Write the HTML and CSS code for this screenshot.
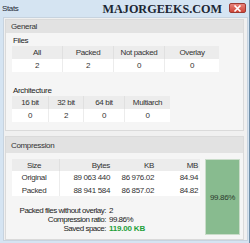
FILE: index.html
```html
<!DOCTYPE html>
<html lang="en">
<head>
    <meta charset="UTF-8">
    <title>Stats</title>
    <link rel="stylesheet" href="styles.css">
</head>
<body>
    <div class="window">
        <div class="titlebar">
            <span class="title">Stats</span>
            <span class="watermark">MAJORGEEKS.COM</span>
            <span class="close">
                <svg width="9" height="7" viewBox="0 0 9 7"><path d="M1.5 0.5 L7.5 6.5 M7.5 0.5 L1.5 6.5" stroke="#fff" stroke-width="1.6"/></svg>
            </span>
        </div>
        <div class="client">
            <div class="group general">
                <div class="group-head">General</div>
                <div class="group-body">
                    <div class="label">Files</div>
                    <table class="grid files">
                        <tr class="head"><td>All</td><td>Packed</td><td>Not packed</td><td>Overlay</td></tr>
                        <tr><td>2</td><td>2</td><td>0</td><td>0</td></tr>
                    </table>
                    <div class="label arch-label">Architecture</div>
                    <table class="grid arch">
                        <tr class="head"><td>16 bit</td><td>32 bit</td><td>64 bit</td><td>Multiarch</td></tr>
                        <tr><td>0</td><td>2</td><td>0</td><td>0</td></tr>
                    </table>
                </div>
            </div>
            <div class="group compression">
                <div class="group-head comp-head">Compression</div>
                <div class="group-body comp-body">
                    <div class="comp-left">
                        <table class="grid sizes">
                            <tr class="head"><td class="c">Size</td><td>Bytes</td><td>KB</td><td>MB</td></tr>
                            <tr><td class="c">Original</td><td>89 063 440</td><td>86 976.02</td><td>84.94</td></tr>
                            <tr><td class="c">Packed</td><td>88 941 584</td><td>86 857.02</td><td>84.82</td></tr>
                        </table>
                        <div class="summary">
                            <div class="k">Packed files without overlay:</div><div class="v">2</div>
                            <div class="k">Compression ratio:</div><div class="v">99.86%</div>
                            <div class="k">Saved space:</div><div class="v saved">119.00 KB</div>
                        </div>
                    </div>
                    <div class="ratio-box">99.86%</div>
                </div>
            </div>
        </div>
    </div>
</body>
</html>
```

FILE: styles.css
```css
body {
    margin: 0;
    padding: 0;
    background: #fff;
    font-family: 'Liberation Sans', Arial, sans-serif;
    font-size: 8px;
    letter-spacing: -0.35px;
    color: #222;
    white-space: nowrap;
}

.window {
    width: 250px;
    height: 243px;
    box-sizing: border-box;
    background: #d5e4f2;
    border-right: 1px solid #6f8ea8;
    padding: 0 1px 2px 3px;
    display: flex;
    flex-direction: column;
}

.titlebar {
    height: 17px;
    flex: none;
    display: flex;
    align-items: center;
    position: relative;
}

.title {
    margin-left: -1px;
    margin-top: -1px;
    color: #1f2a36;
}

.watermark {
    margin-left: 84px;
    margin-top: 1px;
    font-family: 'Liberation Serif', 'DejaVu Serif', serif;
    font-weight: bold;
    font-size: 12.2px;
    letter-spacing: 0;
    color: #1c2733;
}

.close {
    position: absolute;
    right: 2px;
    top: 3px;
    width: 17px;
    height: 10px;
    background: linear-gradient(#e8827a, #cf4538);
    border: 1px solid #9c3a33;
    border-radius: 2px;
    display: flex;
    align-items: center;
    justify-content: center;
    box-sizing: border-box;
}

.client {
    flex: 1;
    background: #f0f0f0;
    border: 1px solid #c7d3df;
    padding: 1px 3px 0 1px;
    display: flex;
    flex-direction: column;
}

.group {
    border: 1px solid #dadada;
    background: #f5f5f5;
}

.group-head {
    background: #e2e2e2;
    height: 13px;
    line-height: 13px;
    padding-left: 5px;
    color: #333;
}

.general .group-body {
    height: 94px;
    padding: 3px 6px 0 6px;
}

.label {
    height: 10px;
    line-height: 10px;
    margin-left: 1px;
    color: #222;
}

.arch-label {
    margin-top: 14px;
}

.grid {
    border-collapse: collapse;
    font-size: 8px;
    color: #333;
}

.grid td {
    padding: 0;
    height: 13px;
    background: #fff;
    text-align: center;
    border-left: 1px solid #ececec;
}

.grid td:first-child {
    border-left: none;
}

.grid .head td {
    background: #ececec;
    border-left: 1px solid #e0e0e0;
}

.grid .head td:first-child {
    border-left: none;
}

.files td {
    width: 50px;
}

.files td:last-child {
    width: 54px;
}

.arch td:nth-child(1) { width: 36px; }
.arch td:nth-child(2) { width: 34px; }
.arch td:nth-child(3) { width: 40px; }
.arch td:nth-child(4) { width: 45px; }

.compression {
    margin-top: 5px;
    flex: 1;
}

.comp-head {
    height: 16px;
    line-height: 17px;
}

.comp-body {
    display: flex;
    gap: 5px;
    padding: 6px 3px 0 6px;
}

.comp-left {
    flex: none;
}

.sizes {
    width: 188px;
}

.sizes td {
    height: 12px;
    text-align: right;
    border-left: none;
    padding-right: 2px;
}

.sizes tr:nth-child(2) td {
    height: 13px;
}

.sizes td.c {
    text-align: center;
    width: 44px;
    padding: 0 3px 0 0;
    border-right: 1px solid #ececec;
}

.sizes .head td {
    border-left: none;
}

.sizes .head td.c {
    border-right: 1px solid #e0e0e0;
}

.sizes td:nth-child(2) { width: 50px; }
.sizes td:nth-child(3) { width: 42px; }

.summary {
    display: grid;
    grid-template-columns: 87px auto;
    column-gap: 3px;
    margin-top: 10px;
    padding-left: 7px;
    line-height: 9px;
    letter-spacing: -0.5px;
    color: #222;
}

.summary .k {
    text-align: right;
}

.saved {
    color: #1ea03a;
    font-weight: bold;
    letter-spacing: -0.2px;
}

.ratio-box {
    width: 35px;
    height: 76px;
    box-sizing: border-box;
    background: #88bb8f;
    border: 1px solid #c9dcc9;
    display: flex;
    align-items: center;
    justify-content: center;
    color: #2b3a2e;
}
```
